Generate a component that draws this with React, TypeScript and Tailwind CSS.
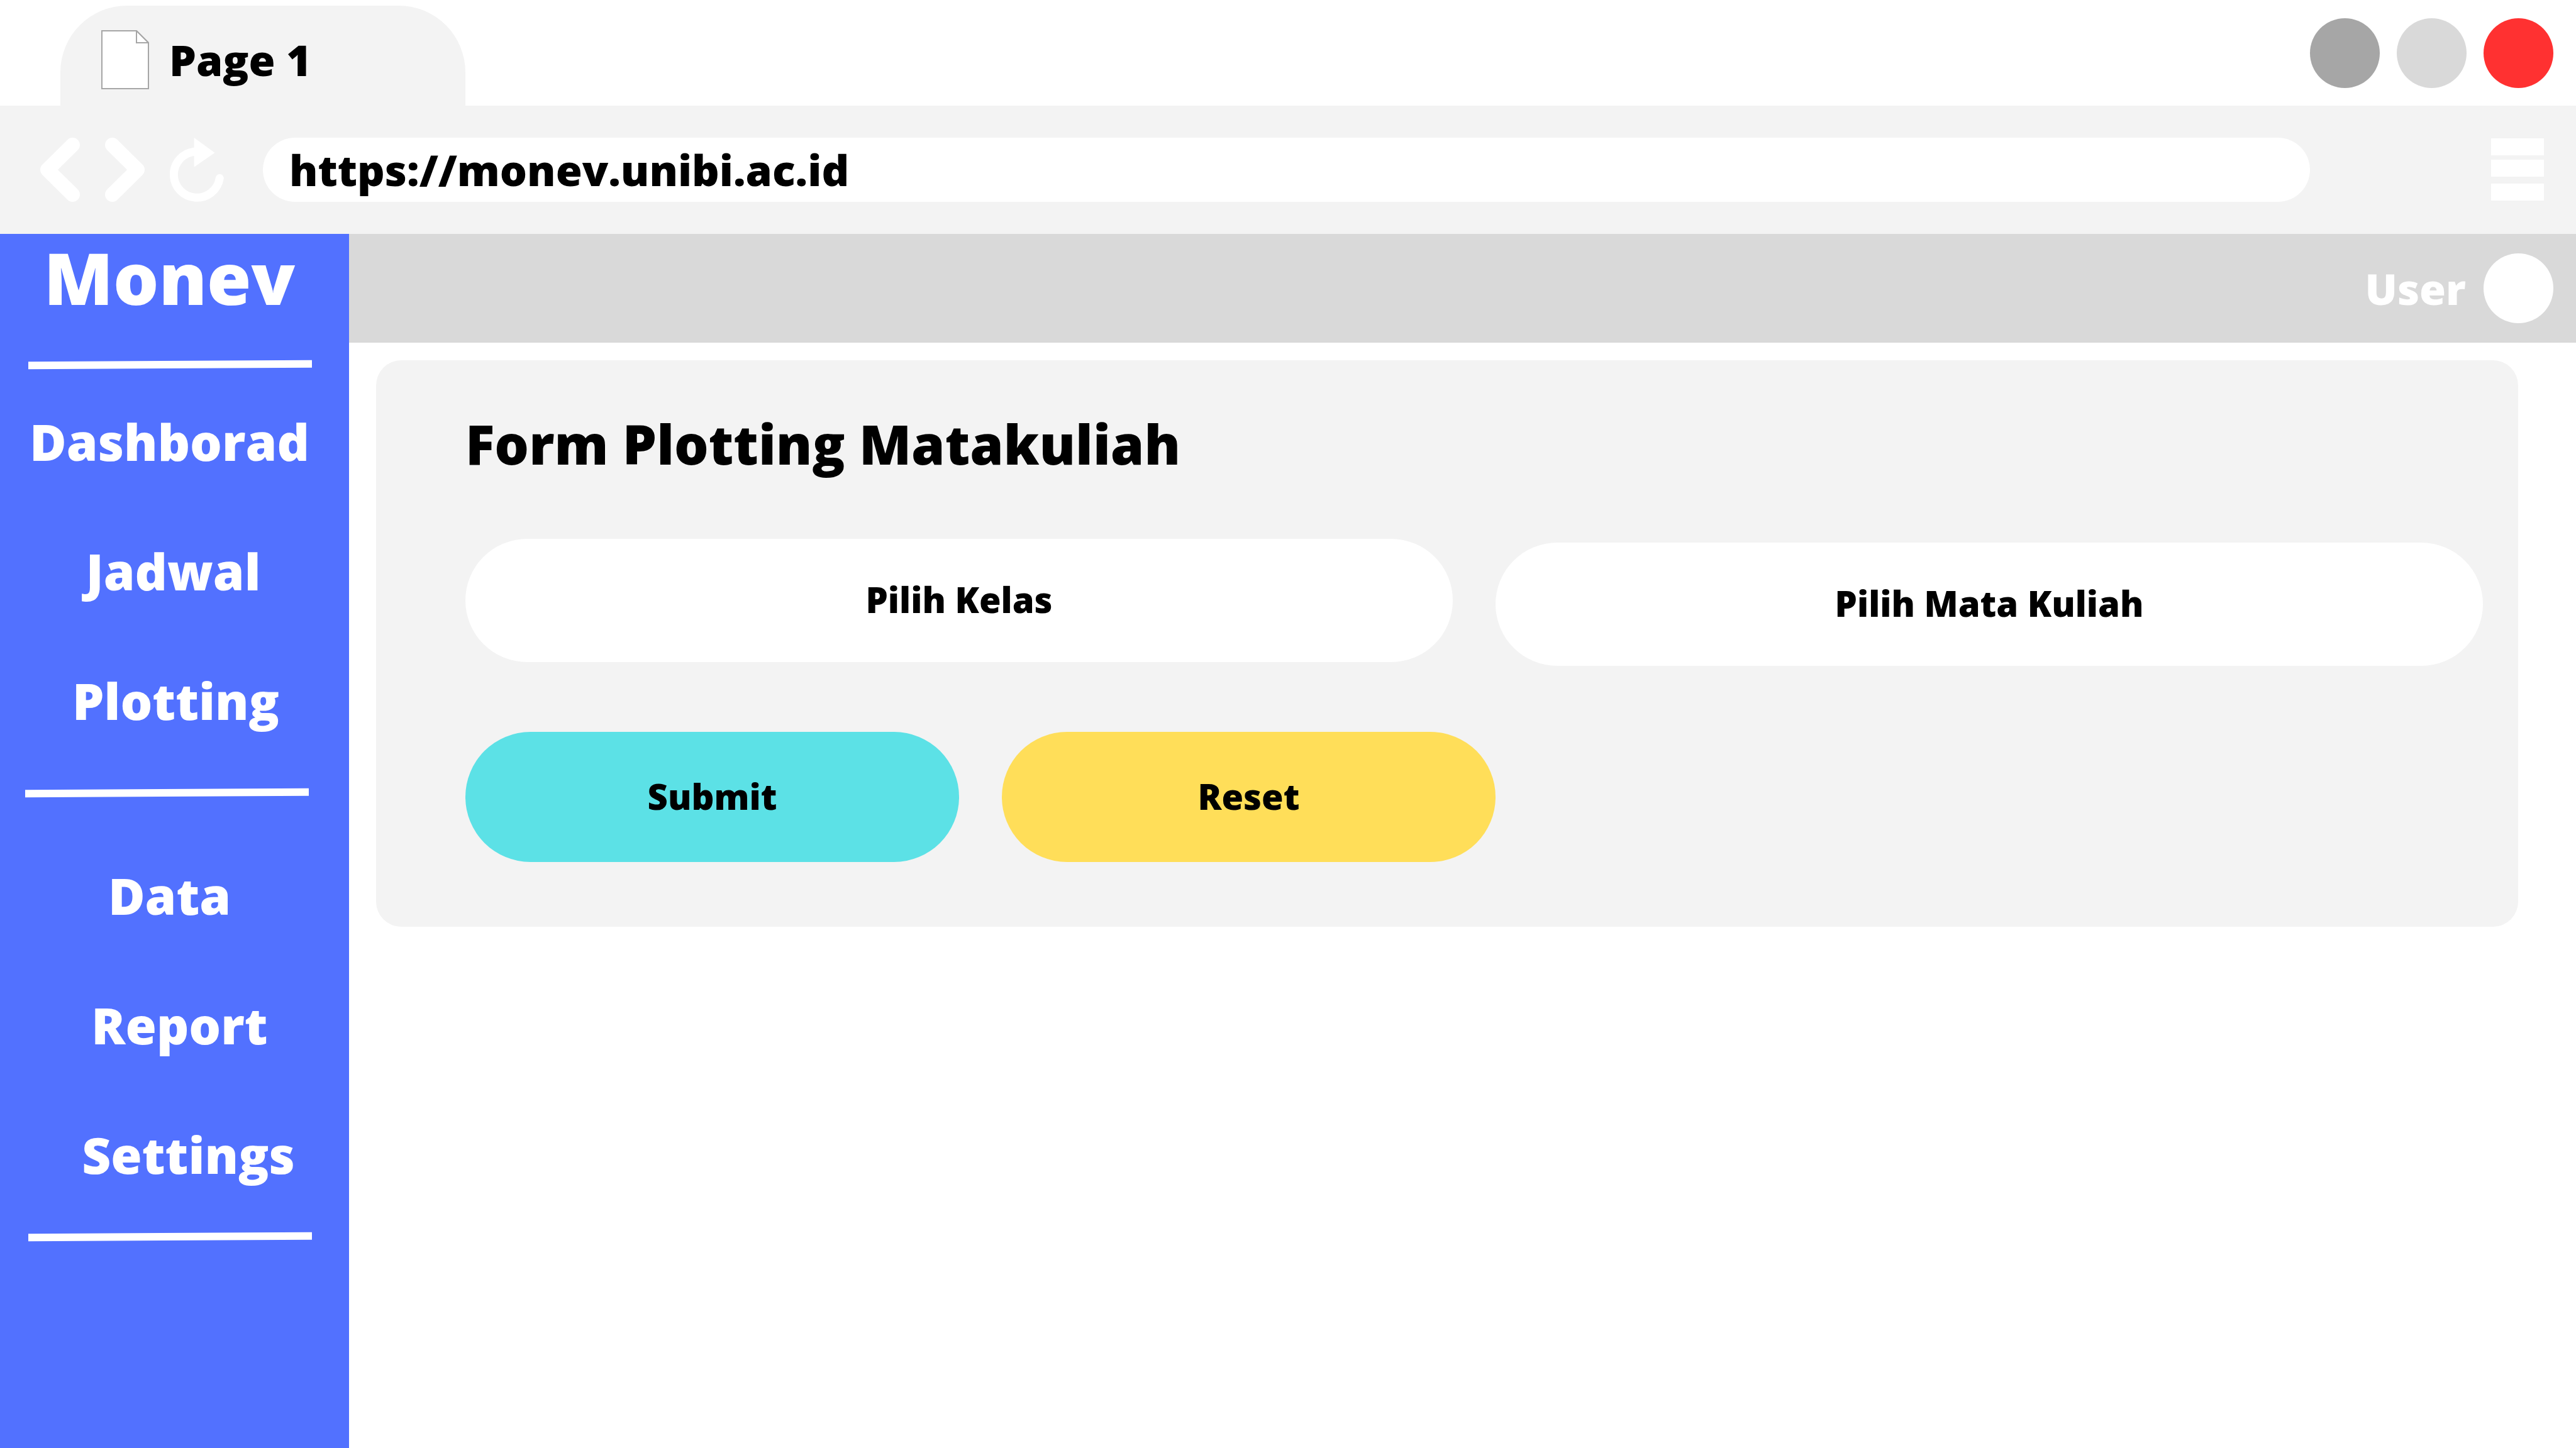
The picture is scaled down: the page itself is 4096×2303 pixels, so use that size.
import React from "react";

type NavItem = { label: string; className?: string };

const mainNav: NavItem[] = [
  { label: "Dashborad" },
  { label: "Jadwal", className: "pl-3" },
  { label: "Plotting", className: "pl-5" },
];

const dataNav: NavItem[] = [
  { label: "Data" },
  { label: "Report", className: "pl-8" },
  { label: "Settings", className: "pl-15" },
];

function PageIcon() {
  return (
    <svg viewBox="0 0 76 94" className="h-[94px] w-[76px] shrink-0" fill="#ffffff" stroke="#a6a6a6" strokeWidth="2" aria-hidden="true">
      <path d="M1 1H56L75 20V93H1Z" />
      <path d="M56 1V20H75Z" />
    </svg>
  );
}

function ChevronIcon({ flipped = false }: { flipped?: boolean }) {
  return (
    <svg viewBox="0 0 63 102" className="h-[102px] w-[63px]" fill="none" stroke="#ffffff" strokeWidth="23" strokeLinecap="round" strokeLinejoin="round" aria-hidden="true">
      <path d={flipped ? "M11.5 11.5L51.5 51L11.5 90.5" : "M51.5 11.5L11.5 51L51.5 90.5"} />
    </svg>
  );
}

function ReloadIcon() {
  return (
    <svg viewBox="0 0 86 102" className="h-[102px] w-[86px]" aria-hidden="true">
      <path d="M38.7 22.2A36.7 36.7 0 1 0 79.3 64.5" fill="none" stroke="#ffffff" strokeWidth="13" strokeLinecap="round" />
      <path d="M38.7 0L71.5 24L38.7 46.7Z" fill="#ffffff" />
    </svg>
  );
}

function MenuIcon() {
  return (
    <svg viewBox="0 0 84 100" className="h-[100px] w-[84px]" fill="#ffffff" aria-hidden="true">
      <rect width="84" height="27" />
      <rect y="34" width="84" height="27" />
      <rect y="72" width="84" height="27" />
    </svg>
  );
}

function Divider({ className }: { className: string }) {
  return <hr className={`h-3 w-[451px] -rotate-[0.3deg] border-0 bg-white ${className}`} />;
}

function NavList({ items }: { items: NavItem[] }) {
  return (
    <ul>
      {items.map((item) => (
        <li key={item.label}>
          <a href="#" className={`flex h-[206px] items-center justify-center pr-4 text-[80px] leading-none ${item.className ?? ""}`}>
            {item.label}
          </a>
        </li>
      ))}
    </ul>
  );
}

function PillSelect({ id, label, className = "" }: { id: string; label: string; className?: string }) {
  return (
    <select
      id={id}
      aria-label={label}
      className={`h-[196px] w-full appearance-none rounded-full bg-white px-12 pb-1 text-center text-[56px] [text-align-last:center] ${className}`}
    >
      <option>{label}</option>
    </select>
  );
}

export default function App() {
  return (
    <div className="flex min-h-screen flex-col bg-white font-['Open_Sans',sans-serif] font-extrabold text-black">
      <header>
        <div className="flex h-42 items-end justify-between pr-9 pl-24">
          <div className="flex h-[159px] w-[644px] items-center gap-8 rounded-t-[106px] bg-[#f3f3f3] pt-3 pl-[65px]">
            <PageIcon />
            <span className="text-[68px] leading-none">Page 1</span>
          </div>
          <div className="flex gap-[27px] self-center">
            <button aria-label="Minimize" className="size-[111px] rounded-full bg-[#a6a6a6]" />
            <button aria-label="Maximize" className="size-[111px] rounded-full bg-[#d9d9d9]" />
            <button aria-label="Close" className="size-[111px] rounded-full bg-[#ff3131]" />
          </div>
        </div>
        <div className="flex h-51 items-center bg-[#f3f3f3] pr-[51px] pl-16">
          <div className="flex gap-10">
            <button aria-label="Back"><ChevronIcon /></button>
            <button aria-label="Forward"><ChevronIcon flipped /></button>
            <button aria-label="Reload"><ReloadIcon /></button>
          </div>
          <input
            aria-label="Address"
            defaultValue="https://monev.unibi.ac.id"
            className="mr-72 ml-[62px] h-[102px] min-w-0 flex-1 rounded-full bg-white px-[42px] text-[68px]"
          />
          <button aria-label="Menu"><MenuIcon /></button>
        </div>
      </header>

      <div className="flex flex-1">
        <aside className="w-[555px] shrink-0 bg-[#5271ff] text-white">
          <h1 className="pr-4 text-center text-[114px] leading-[138px]">Monev</h1>
          <Divider className="mt-16 ml-[45px]" />
          <nav className="mt-[13px]">
            <NavList items={mainNav} />
            <Divider className="mt-[38px] mb-[54px] ml-10" />
            <NavList items={dataNav} />
          </nav>
          <Divider className="mt-[22px] ml-[45px]" />
        </aside>

        <div className="min-w-0 flex-1">
          <div className="flex h-[173px] items-center justify-end bg-[#d9d9d9] pr-9">
            <button className="flex items-center gap-7 text-[68px] leading-none text-white">
              User
              <span className="size-[111px] rounded-full bg-white" />
            </button>
          </div>

          <main className="mt-7 mr-[92px] ml-[43px] rounded-[40px] bg-[#f3f3f3] pt-[73px] pr-14 pb-[103px] pl-[142px]">
            <h2 className="text-[86px] leading-[120px]">Form Plotting Matakuliah</h2>
            <form onSubmit={(e) => e.preventDefault()}>
              <div className="mt-[91px] grid grid-cols-2 items-start gap-[68px]">
                <PillSelect id="kelas" label="Pilih Kelas" />
                <PillSelect id="matakuliah" label="Pilih Mata Kuliah" className="mt-1.5" />
              </div>
              <div className="mt-[105px] flex gap-[68px] text-[56px]">
                <button type="submit" className="h-[207px] w-[785px] rounded-full bg-[#5ce1e6] pb-1">Submit</button>
                <button type="reset" className="h-[207px] w-[785px] rounded-full bg-[#ffde59] pb-1">Reset</button>
              </div>
            </form>
          </main>
        </div>
      </div>
    </div>
  );
}
